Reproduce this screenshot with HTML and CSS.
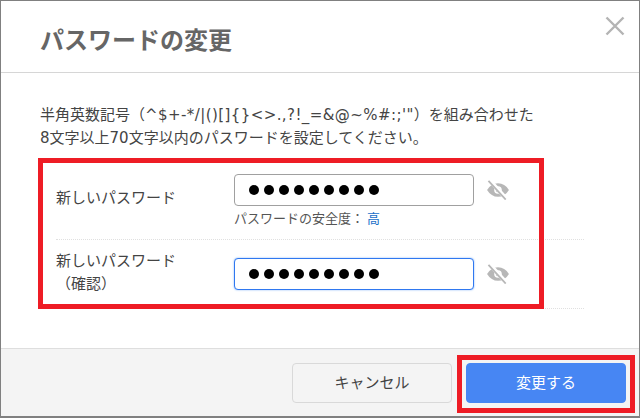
FILE: index.html
```html
<!DOCTYPE html>
<html lang="ja">
<head>
<meta charset="utf-8">
<title>パスワードの変更</title>
<link rel="stylesheet" href="styles.css">
</head>
<body>
<div class="dialog">
  <header class="head">
    <h1 class="title">パスワードの変更</h1>
    <svg class="close" width="20" height="20" viewBox="0 0 20 20"><path d="M1.5 1.5 18.5 18.5M18.5 1.5 1.5 18.5" fill="none" stroke="#b4b4b4" stroke-width="2.4"/></svg>
  </header>
  <main class="body">
    <p class="intro">半角英数記号（<span class="symbols">^$+-*/|()[]{}&lt;&gt;.,?!_=&amp;@~%#:;'"</span>）を組み合わせた<br>8文字以上70文字以内のパスワードを設定してください。</p>
    <div class="form">
      <div class="row row-first">
        <div class="label label-first">新しいパスワード</div>
        <div class="field">
          <div class="input"><span class="dot"></span><span class="dot"></span><span class="dot"></span><span class="dot"></span><span class="dot"></span><span class="dot"></span><span class="dot"></span><span class="dot"></span><span class="dot"></span></div>
          <div class="hint">パスワードの安全度：<span class="level">高</span></div>
        </div>
        <svg class="eye" width="24" height="20" viewBox="0 0 26 22"><path d="M1 11C4 6 8 3.500 13 3.500S22 6 25 11C22 16 18 18.500 13 18.500S4 16 1 11Z" fill="#b7b7b7"/><circle cx="13" cy="11" r="4.200" fill="#fff"/><circle cx="13" cy="11" r="2.400" fill="#b7b7b7"/><path d="M3.500 0 22.500 21" stroke="#fff" stroke-width="4.500"/><path d="M2.500 1 21.500 21.500" stroke="#b7b7b7" stroke-width="2"/></svg>
      </div>
      <div class="row row-second">
        <div class="label">新しいパスワード<br>（確認）</div>
        <div class="field field-second">
          <div class="input input-focus"><span class="dot"></span><span class="dot"></span><span class="dot"></span><span class="dot"></span><span class="dot"></span><span class="dot"></span><span class="dot"></span><span class="dot"></span><span class="dot"></span></div>
        </div>
        <svg class="eye eye-second" width="24" height="20" viewBox="0 0 26 22"><path d="M1 11C4 6 8 3.500 13 3.500S22 6 25 11C22 16 18 18.500 13 18.500S4 16 1 11Z" fill="#b7b7b7"/><circle cx="13" cy="11" r="4.200" fill="#fff"/><circle cx="13" cy="11" r="2.400" fill="#b7b7b7"/><path d="M3.500 0 22.500 21" stroke="#fff" stroke-width="4.500"/><path d="M2.500 1 21.500 21.500" stroke="#b7b7b7" stroke-width="2"/></svg>
      </div>
    </div>
  </main>
  <footer class="foot">
    <button class="btn btn-cancel">キャンセル</button>
    <button class="btn btn-primary">変更する</button>
  </footer>
  <div class="mark mark-form"></div>
  <div class="mark mark-button"></div>
</div>
</body>
</html>
```

FILE: styles.css
```css
* { box-sizing: border-box; }
html, body { margin: 0; padding: 0; }
body { width: 640px; height: 418px; overflow: hidden; background: #fff; }
.dialog {
  position: relative;
  width: 640px;
  height: 418px;
  display: flex;
  flex-direction: column;
  border: 1px solid #808080;
  border-width: 1px 1px 2px 1px;
  font-family: "DejaVu Sans", "Noto Sans CJK JP", sans-serif;
  color: #444;
  background: #fff;
}
.head {
  height: 72px;
  flex: none;
  display: flex;
  justify-content: space-between;
  align-items: flex-start;
  padding: 15px 14px 0 39px;
  border-bottom: 1px solid #d6d6d6;
}
.title { margin: 9px 0 0; font-size: 24px; line-height: 32px; font-weight: 700; color: #666; }
.close { flex: none; }
.body { flex: 1; padding: 31px 55px 0 39px; }
.intro { margin: 0 0 9px; font-size: 15px; line-height: 23px; color: #444; white-space: nowrap; }
.symbols { letter-spacing: 0.42px; }
.form { display: flex; flex-direction: column; margin-left: -1px; }
.row {
  display: flex;
  align-items: flex-start;
  margin-left: 17px;
  border-bottom: 1px dotted #e0e0e0;
}
.row-first { height: 81px; padding-top: 15px; }
.row-second { height: 69px; padding-top: 10px; }
.label { width: 178px; flex: none; font-size: 15px; line-height: 23px; color: #444; }
.label-first { padding-top: 13px; }
.field { width: 240px; flex: none; }
.field-second { margin-top: 8px; }
.input {
  height: 32px;
  display: flex;
  align-items: center;
  gap: 5px;
  padding-left: 14px;
  background: #fff;
  border: 1px solid #a0a0a0;
  border-radius: 4px;
}
.input-focus { border-color: #2f78f0; box-shadow: 0 0 2px #7fb0f8; }
.dot { width: 10px; height: 10px; border-radius: 50%; background: #000; }
.hint { margin-top: 3px; font-size: 13px; line-height: 20px; color: #555; }
.level { color: #1a6fc9; margin-left: 3px; }
.eye { flex: none; margin: 6px 0 0 12px; }
.eye-second { margin-top: 14px; }
.foot {
  height: 68px;
  flex: none;
  display: flex;
  justify-content: flex-end;
  gap: 14px;
  padding: 14px 13px 0 0;
  background: #f4f4f4;
  border-top: 1px solid #dedede;
}
.btn {
  width: 160px;
  height: 40px;
  font: 15px/1 "DejaVu Sans", "Noto Sans CJK JP", sans-serif;
  border-radius: 4px;
  padding: 0;
}
.btn-cancel { background: #f4f4f4; border: 1px solid #d9d9d9; color: #444; }
.btn-primary { background: #4786f3; border: 1px solid #4786f3; color: #fff; }
.mark { position: absolute; border: 5px solid #ee1c25; pointer-events: none; }
.mark-form { left: 37px; top: 157px; width: 506px; height: 151px; }
.mark-button { left: 456px; top: 354px; width: 178px; height: 58px; }
```
